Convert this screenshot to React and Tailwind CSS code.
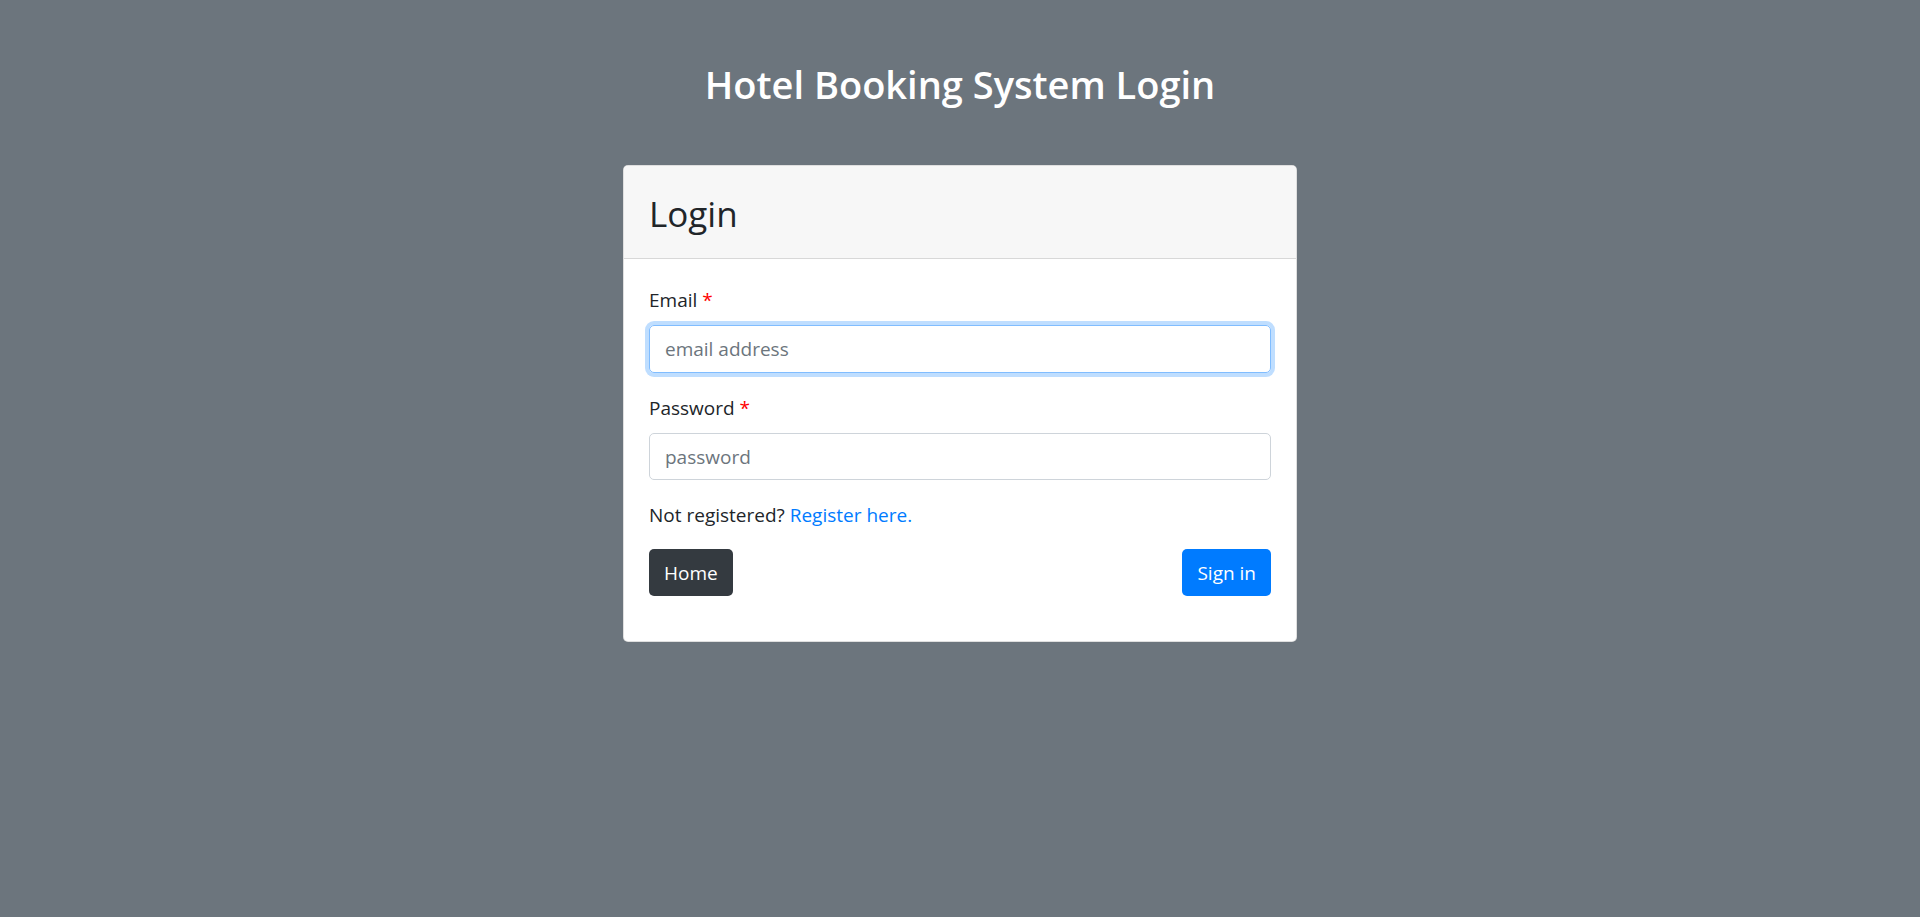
import { useState } from 'react';

export default function App() {
  const [email, setEmail] = useState('');
  const [password, setPassword] = useState('');

  return (
    <div className="min-h-screen bg-[#6c757d] text-[#212529] font-['Open_Sans',sans-serif] text-[19px] leading-[30px]">
      <h2 className="pt-[60px] mb-[57px] text-center text-white text-[38px] leading-[48px] font-semibold">
        Hotel Booking System Login
      </h2>

      <div className="mx-auto w-[674px] bg-white border border-black/[.125] rounded-[5px] overflow-hidden">
        <div className="bg-[#f7f7f7] border-b border-black/[.125] px-[25px] pt-[27px] pb-[23px]">
          <h3 className="text-[35px] leading-[42px] font-normal">Login</h3>
        </div>

        <form className="px-[25px] pt-[26px] pb-[25px]" onSubmit={(e) => e.preventDefault()}>
          <div className="mb-[20px]">
            <label className="block mb-[10px]">
              Email <span className="text-[#ff0000]">*</span>
            </label>
            <input
              type="email"
              value={email}
              onChange={(e) => setEmail(e.target.value)}
              placeholder="email address"
              className="block w-full h-[48px] px-[15px] rounded-[5px] border border-[#80bdff] outline-none shadow-[0_0_0_4px_rgba(0,123,255,0.25)] placeholder:text-[#6c757d]"
            />
          </div>

          <div className="mb-[20px]">
            <label className="block mb-[10px]">
              Password <span className="text-[#ff0000]">*</span>
            </label>
            <input
              type="password"
              value={password}
              onChange={(e) => setPassword(e.target.value)}
              placeholder="password"
              className="block w-full h-[47px] px-[15px] rounded-[5px] border border-[#ced4da] outline-none placeholder:text-[#6c757d]"
            />
          </div>

          <p className="mb-[19px]">
            Not registered? <a href="#" className="text-[#007bff]">Register here.</a>
          </p>

          <div className="flex justify-between mb-[20px]">
            <button type="button" className="h-[47px] px-[15px] rounded-[5px] bg-[#343a40] text-white">
              Home
            </button>
            <button type="submit" className="h-[47px] px-[15px] rounded-[5px] bg-[#007bff] text-white">
              Sign in
            </button>
          </div>
        </form>
      </div>
    </div>
  );
}
